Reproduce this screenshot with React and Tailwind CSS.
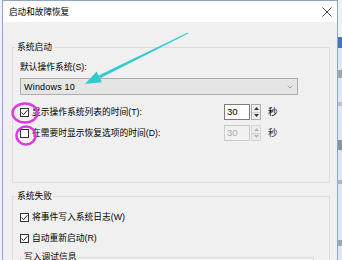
import { ChevronDown } from 'lucide-react'

const FONT = "font-['Liberation_Sans','Noto_Sans_CJK_SC',sans-serif]"

function Check({ checked }) {
  return (
    <span className="flex h-[9px] w-[9px] shrink-0 items-center justify-center border border-[#333333] bg-white">
      {checked && (
        <svg width="7" height="7" viewBox="0 0 7 7">
          <path d="M0.6 3.6 L2.6 5.6 L6.4 1.2" fill="none" stroke="#222" strokeWidth="1" />
        </svg>
      )}
    </span>
  )
}

function Spinner({ disabled }) {
  const border = disabled ? 'border-[#cccccc]' : 'border-[#7a7a7a]'
  const arrow = disabled ? '#b5b5b5' : '#333'
  return (
    <div className="flex h-[16px] w-[38px]">
      <div className={`w-[26px] border ${border} ${disabled ? 'bg-[#f0f0f0] text-[#a8a8a8]' : 'bg-white text-black'} pl-[2px] text-[9.5px] leading-[14px]`}>
        30
      </div>
      <div className={`ml-[1px] flex w-[10px] flex-col border ${disabled ? 'border-[#d6d6d6]' : 'border-[#adadad]'}`}>
        <div className="flex flex-1 items-center justify-center border-b border-[#d0d0d0] bg-[#ececec]">
          <svg width="5" height="3" viewBox="0 0 5 3"><path d="M0 3 L2.5 0 L5 3 Z" fill={arrow} /></svg>
        </div>
        <div className="flex flex-1 items-center justify-center bg-[#ececec]">
          <svg width="5" height="3" viewBox="0 0 5 3"><path d="M0 0 L2.5 3 L5 0 Z" fill={arrow} /></svg>
        </div>
      </div>
    </div>
  )
}

function CheckRow({ checked, label, className = '' }) {
  return (
    <div className={`flex h-[12px] items-center gap-[3px] ${className}`}>
      <Check checked={checked} />
      <span className="text-[8.75px] leading-[12px] text-black whitespace-nowrap">{label}</span>
    </div>
  )
}

function TimeRow({ checked, label, disabled, className = '' }) {
  return (
    <div className={`flex h-[16px] items-center ${className}`}>
      <div className="flex w-[204px] items-center gap-[3px]">
        <Check checked={checked} />
        <span className="text-[8.75px] leading-[12px] text-black whitespace-nowrap">{label}</span>
      </div>
      <Spinner disabled={disabled} />
      <span className={`ml-[6px] text-[9.5px] leading-[12px] ${disabled ? 'text-[#333]' : 'text-black'}`}>秒</span>
    </div>
  )
}

export default function App() {
  return (
    <div className={`relative flex h-[260px] w-[342px] overflow-hidden bg-[#f3f3f3] ${FONT}`}>
      <div className="w-[2px] shrink-0 bg-[#f2f2f2]" />

      {/* dialog window */}
      <div className="flex w-[336px] shrink-0 flex-col border-x border-t border-[#8ea6c6]">
        <div className="flex h-[21px] shrink-0 items-center justify-between bg-white pl-[6px] pr-[5px]">
          <span className="text-[8.6px] leading-[12px] text-black">启动和故障恢复</span>
          <svg width="10" height="10" viewBox="0 0 10 10">
            <path d="M0.5 0.5 L9.5 9.5 M9.5 0.5 L0.5 9.5" stroke="#333" strokeWidth="0.9" />
          </svg>
        </div>

        <div className="flex-1 overflow-hidden bg-[#f0f0f0] pl-[9px] pt-[19px]">
          {/* 系统启动 */}
          <fieldset className="h-[142px] w-[318px] border border-[#dcdcdc]">
            <legend className="ml-[2px] px-[2px] text-[8.75px] leading-[12px] text-black">系统启动</legend>
            <div className="pl-[7px] pt-[8px]">
              <div className="text-[8.75px] leading-[12px] text-black">默认操作系统(S):</div>
              <div className="mt-[5px] flex h-[17px] w-[278px] items-center justify-between border border-[#adadad] bg-[#e5e5e5] pl-[3px] pr-[3px]">
                <span className="text-[9px] leading-[12px] tracking-[0.2px] text-black">Windows 10</span>
                <ChevronDown size={8} strokeWidth={1.5} color="#555" />
              </div>
              <TimeRow className="mt-[9px]" checked label="显示操作系统列表的时间(T):" />
              <TimeRow className="mt-[5px]" disabled label="在需要时显示恢复选项的时间(D):" />
            </div>
          </fieldset>

          {/* 系统失败 */}
          <fieldset className="mt-[7px] h-[100px] w-[318px] border border-[#dcdcdc]">
            <legend className="ml-[2px] px-[2px] text-[8.75px] leading-[12px] text-black">系统失败</legend>
            <div className="pl-[7px] pt-[9px]">
              <CheckRow checked label="将事件写入系统日志(W)" />
              <CheckRow className="mt-[9px]" checked label="自动重新启动(R)" />
              <fieldset className="mt-[7px] h-[40px] w-[294px] border border-[#dcdcdc]">
                <legend className="ml-[1px] px-[2px] text-[8.75px] leading-[12px] text-black">写入调试信息</legend>
              </fieldset>
            </div>
          </fieldset>
        </div>
      </div>

      {/* desktop behind, right edge */}
      <div className="flex w-[4px] shrink-0 flex-col bg-[#dfe8f2]">
        <div className="h-[37px] bg-[#eef1f5]" />
        <div className="h-[11px] bg-[#3f78c2]" />
        <div className="mt-[22px] h-[8px] bg-[#9aa8b8]" />
        <div className="mt-[24px] h-[4px] bg-[#b8c4d2]" />
        <div className="mt-[34px] h-[10px] bg-[#8794a6]" />
        <div className="mt-[30px] h-[4px] bg-[#aab8c8]" />
        <div className="mt-[56px] h-[6px] bg-[#9aa8b8]" />
      </div>

      {/* annotations */}
      <svg className="pointer-events-none absolute inset-0" width="342" height="260" viewBox="0 0 342 260">
        <polygon points="188.2,33.4 187.8,32.6 98.6,75.6 100,78.2" fill="#33c9d1" />
        <polygon points="85,84 96.6,71.5 102,82.3" fill="#33c9d1" />
        <ellipse cx="25" cy="113" rx="12.5" ry="9.5" fill="none" stroke="#db3bdb" strokeWidth="2.4" />
        <ellipse cx="26" cy="135.5" rx="9.5" ry="9" fill="none" stroke="#db3bdb" strokeWidth="2.4" />
      </svg>
    </div>
  )
}
